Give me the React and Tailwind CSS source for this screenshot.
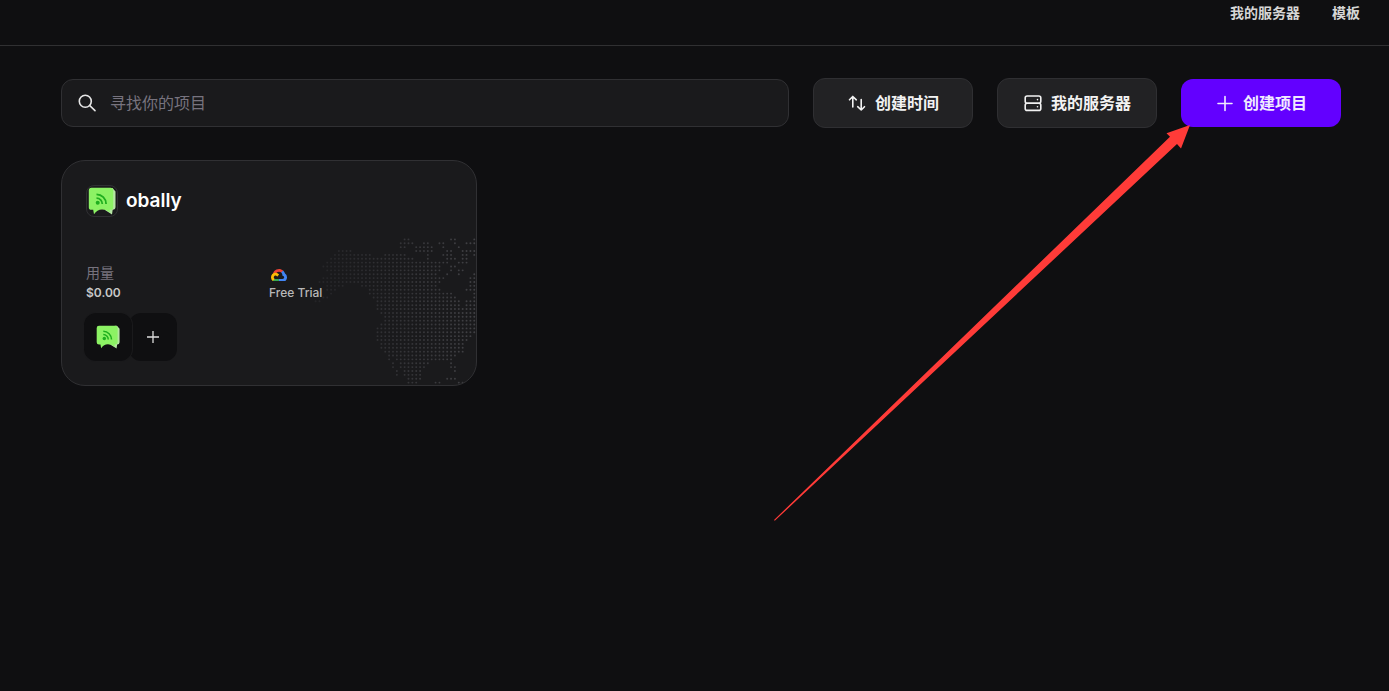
import { useId, useState } from "react";

// Runs of lit dots per row: [first column, last column]
const MAP_ROWS = [
  [[23, 24], [35, 36], [41, 41]],
  [[22, 25], [28, 29], [32, 33], [36, 36], [39, 41]],
  [[22, 23], [26, 30], [33, 33], [37, 37]],
  [[6, 9], [26, 30], [34, 35], [38, 41]],
  [[5, 14], [18, 23], [29, 29], [33, 35], [38, 39], [41, 41]],
  [[4, 25], [29, 29], [34, 36], [38, 39]],
  [[3, 34], [37, 39]],
  [[2, 32], [35, 36]],
  [[3, 32], [35, 35], [37, 38]],
  [[4, 31], [34, 34], [37, 37], [41, 41]],
  [[2, 33], [40, 41]],
  [[1, 32], [40, 41]],
  [[3, 7], [12, 31], [40, 41]],
  [[3, 5], [14, 32], [39, 41]],
  [[4, 4], [14, 35], [41, 41]],
  [[2, 3], [15, 36], [41, 41]],
  [[0, 1], [16, 37], [39, 41]],
  [[16, 37], [39, 41]],
  [[16, 41]],
  [[17, 41]],
  [[18, 41]],
  [[18, 41]],
  [[17, 41]],
  [[16, 41]],
  [[16, 41]],
  [[16, 40]],
  [[16, 39]],
  [[17, 38]],
  [[17, 38]],
  [[18, 38]],
  [[19, 36]],
  [[19, 19], [21, 35]],
  [[20, 20], [22, 29], [35, 35]],
  [[20, 20], [22, 28], [35, 36]],
  [[21, 21], [23, 27], [36, 36]],
  [[21, 21], [23, 27]],
  [[24, 27], [34, 36]],
  [[24, 26], [31, 32], [37, 38]],
];

const DOT_STEP = 3.87;

const MAP_DOTS = MAP_ROWS.flatMap((runs, row) =>
  runs.flatMap(([from, to]) =>
    Array.from({ length: to - from + 1 }, (_, i) => ({
      x: 1.6 + (from + i) * DOT_STEP,
      y: 1.4 + row * DOT_STEP,
    })),
  ),
);

function DotMap({ className }) {
  const id = useId();
  return (
    <svg className={className} viewBox="0 0 162 147" aria-hidden="true">
      <defs>
        <linearGradient
          id={id}
          gradientUnits="userSpaceOnUse"
          x1="0"
          y1="0"
          x2="162"
          y2="0">
          <stop offset="0" stopColor="#242427" />
          <stop offset="1" stopColor="#414145" />
        </linearGradient>
      </defs>
      <g fill={`url(#${id})`}>
        {MAP_DOTS.map(({ x, y }) => (
          <circle key={`${x}-${y}`} cx={x} cy={y} r="0.95" />
        ))}
      </g>
    </svg>
  );
}

function RssBubble({ className }) {
  return (
    <svg className={className} viewBox="0 0 28 28" aria-hidden="true">
      <path
        d="M22 1h2.500l3 3.500V20q0 2.500-2.800 2.800L24 27.500 17 23z"
        fill="#b5e6a3"
      />
      <path
        d="M3.500.8h19q2.700 0 2.700 2.700v16.700q0 2.600-2.700 2.600h-.8v2.700q-3-3-7.700-3-5 0-8 4.700L5.200 22.800H3.500q-2.700 0-2.700-2.600V3.500Q.8.800 3.500.8z"
        fill="#8cf264"
      />
      <circle cx="9.700" cy="15.800" r="2" fill="#1fae1f" />
      <path
        d="M8.500 11.200a5.800 5.800 0 0 1 5.800 5.800M8.500 7.400a9.600 9.600 0 0 1 9.600 9.600"
        fill="none"
        stroke="#1fae1f"
        strokeWidth="1.800"
      />
    </svg>
  );
}

function GoogleCloudIcon({ className }) {
  return (
    <svg className={className} viewBox="0 0 256 206" aria-hidden="true">
      <path
        fill="#EA4335"
        d="M170.252 56.819l22.253-22.253 1.483-9.370C153.437-11.677 88.976-7.496 52.420 33.920 42.267 45.423 34.734 59.764 30.717 74.573l7.970-1.123 44.505-7.340 3.436-3.513c19.797-21.742 53.270-24.667 76.128-6.168l7.496.390z"
      />
      <path
        fill="#4285F4"
        d="M224.205 73.918a100.249 100.249 0 0 0-30.217-48.722l-31.232 31.232a55.515 55.515 0 0 1 20.379 44.037v5.544c15.350 0 27.797 12.450 27.797 27.796 0 15.352-12.446 27.573-27.797 27.573h-55.671l-5.466 5.934v33.340l5.466 5.231h55.671c39.930.311 72.553-31.494 72.864-71.424a72.303 72.303 0 0 0-31.794-60.541"
      />
      <path
        fill="#34A853"
        d="M71.870 205.796h55.593V161.290H71.870a27.275 27.275 0 0 1-11.470-2.500l-7.887 2.420-22.408 22.253-1.952 7.574a72.017 72.017 0 0 0 43.717 14.759"
      />
      <path
        fill="#FBBC05"
        d="M71.870 61.426C31.941 61.664-.237 94.228.001 134.160a72.301 72.301 0 0 0 28.222 56.878l32.248-32.246c-13.990-6.322-20.208-22.786-13.887-36.776 6.320-13.990 22.786-20.208 36.775-13.888a27.796 27.796 0 0 1 13.887 13.888l32.248-32.248A72.224 72.224 0 0 0 71.870 61.426"
      />
    </svg>
  );
}

function LineIcon({ children }) {
  return (
    <svg
      className="size-5 shrink-0"
      viewBox="0 0 20 20"
      fill="none"
      stroke="currentColor"
      strokeWidth="1.600"
      strokeLinecap="round"
      strokeLinejoin="round"
      aria-hidden="true">
      {children}
    </svg>
  );
}

function ToolbarButton({ children }) {
  return (
    <button
      type="button"
      className="flex h-[50px] w-40 shrink-0 items-center justify-center gap-2 rounded-xl border border-[#2f2f32] bg-[#222224] pb-px font-bold text-[#f2f2f2]">
      {children}
    </button>
  );
}

function ProjectCard({ name, usage, plan }) {
  return (
    <article className="relative w-full max-w-[416px] overflow-hidden rounded-3xl border border-[#303033] bg-[#1a1a1c] p-6">
      <DotMap className="pointer-events-none absolute right-0 bottom-0 w-[162px]" />

      <div className="relative flex items-center gap-2">
        <span className="flex size-8 items-center justify-center rounded-lg border border-[#303033]">
          <RssBubble className="size-7" />
        </span>
        <h2 className="text-[19px] leading-7 font-semibold text-white">
          {name}
        </h2>
      </div>

      <dl className="relative mt-[46px] grid grid-cols-2">
        <div>
          <dt className="text-sm leading-5 text-[#77737e]">用量</dt>
          <dd className="text-xs leading-5 font-semibold text-[#c8c8c8]">
            {usage}
          </dd>
        </div>
        <div>
          <dt
            className="flex h-5 items-center pt-1 pl-0.5"
            aria-label="Google Cloud">
            <GoogleCloudIcon className="w-4" />
          </dt>
          <dd className="text-xs leading-5 font-medium text-[#b8b8b8]">
            {plan}
          </dd>
        </div>
      </dl>

      <div className="relative mt-2.5 -ml-0.5 flex">
        <span className="z-10 flex size-12 items-center justify-center rounded-xl bg-[#0f0f11] ring-1 ring-[#1a1a1c]">
          <RssBubble className="size-6" />
        </span>
        <button
          type="button"
          aria-label="Add service"
          className="-ml-[3px] flex size-12 items-center justify-center rounded-xl bg-[#0f0f11] text-[#dedede]">
          <svg className="size-4" viewBox="0 0 16 16" aria-hidden="true">
            <path d="M8 2v12M2 8h12" stroke="currentColor" strokeWidth="1.300" />
          </svg>
        </button>
      </div>
    </article>
  );
}

export default function App() {
  const [query, setQuery] = useState("");

  return (
    <div className="relative min-h-screen overflow-hidden bg-[#0f0f11] font-[Inter,'Noto_Sans_CJK_SC',sans-serif]">
      <header className="border-b border-[#303032] pt-[3px] pb-[22px]">
        <nav className="flex justify-end gap-8 pr-[29px] text-sm leading-5 font-bold text-[#d6d6d6]">
          <a href="#servers">我的服务器</a>
          <a href="#templates">模板</a>
        </nav>
      </header>

      <main className="flex flex-col gap-8 pt-8 pr-12 pl-[61px]">
        <div className="flex items-center gap-6">
          <label className="flex h-12 min-w-0 flex-1 items-center gap-3 rounded-xl border border-[#303033] bg-[#1a1a1c] px-4 text-[#e6e6e6]">
            <LineIcon>
              <circle cx="7.300" cy="8.200" r="6" />
              <path d="M11.800 12.700l5.200 5" />
            </LineIcon>
            <input
              type="text"
              aria-label="寻找你的项目"
              placeholder="寻找你的项目"
              value={query}
              onChange={(e) => setQuery(e.target.value)}
              className="min-w-0 flex-1 bg-transparent text-base outline-none placeholder:text-[#77737e]"
            />
          </label>

          <ToolbarButton>
            <LineIcon>
              <path d="M5.800 14V3.500M2.500 6.800l3.300-3.300L9.300 6.800M14.200 6.500V17M10.700 13.700l3.500 3.300 3.300-3.300" />
            </LineIcon>
            创建时间
          </ToolbarButton>

          <ToolbarButton>
            <LineIcon>
              <rect x="2.200" y="3" width="15.600" height="7.200" rx="2" />
              <rect x="2.200" y="10.200" width="15.600" height="7.200" rx="2" />
              <path d="M14.500 6.600v.010M14.500 13.800v.010" />
            </LineIcon>
            我的服务器
          </ToolbarButton>

          <button
            type="button"
            className="flex h-12 w-40 shrink-0 items-center justify-center gap-2 rounded-xl bg-[#6300ff] pb-px font-bold text-[#f0eaff]">
            <LineIcon>
              <path d="M10 3.500v14M3 10.500h14" />
            </LineIcon>
            创建项目
          </button>
        </div>

        <ProjectCard name="obally" usage="$0.00" plan="Free Trial" />
      </main>

      {/* Pointer to the create button */}
      <svg
        className="pointer-events-none absolute top-[125px] right-[199px] h-[396px] w-[416px]"
        viewBox="0 0 416 396"
        aria-hidden="true">
        <path
          d="M416 0L392.500 8.300L396 11.700L0 395L.8 395.800L403 19L407 23.500z"
          fill="#ff3b38"
        />
      </svg>
    </div>
  );
}
